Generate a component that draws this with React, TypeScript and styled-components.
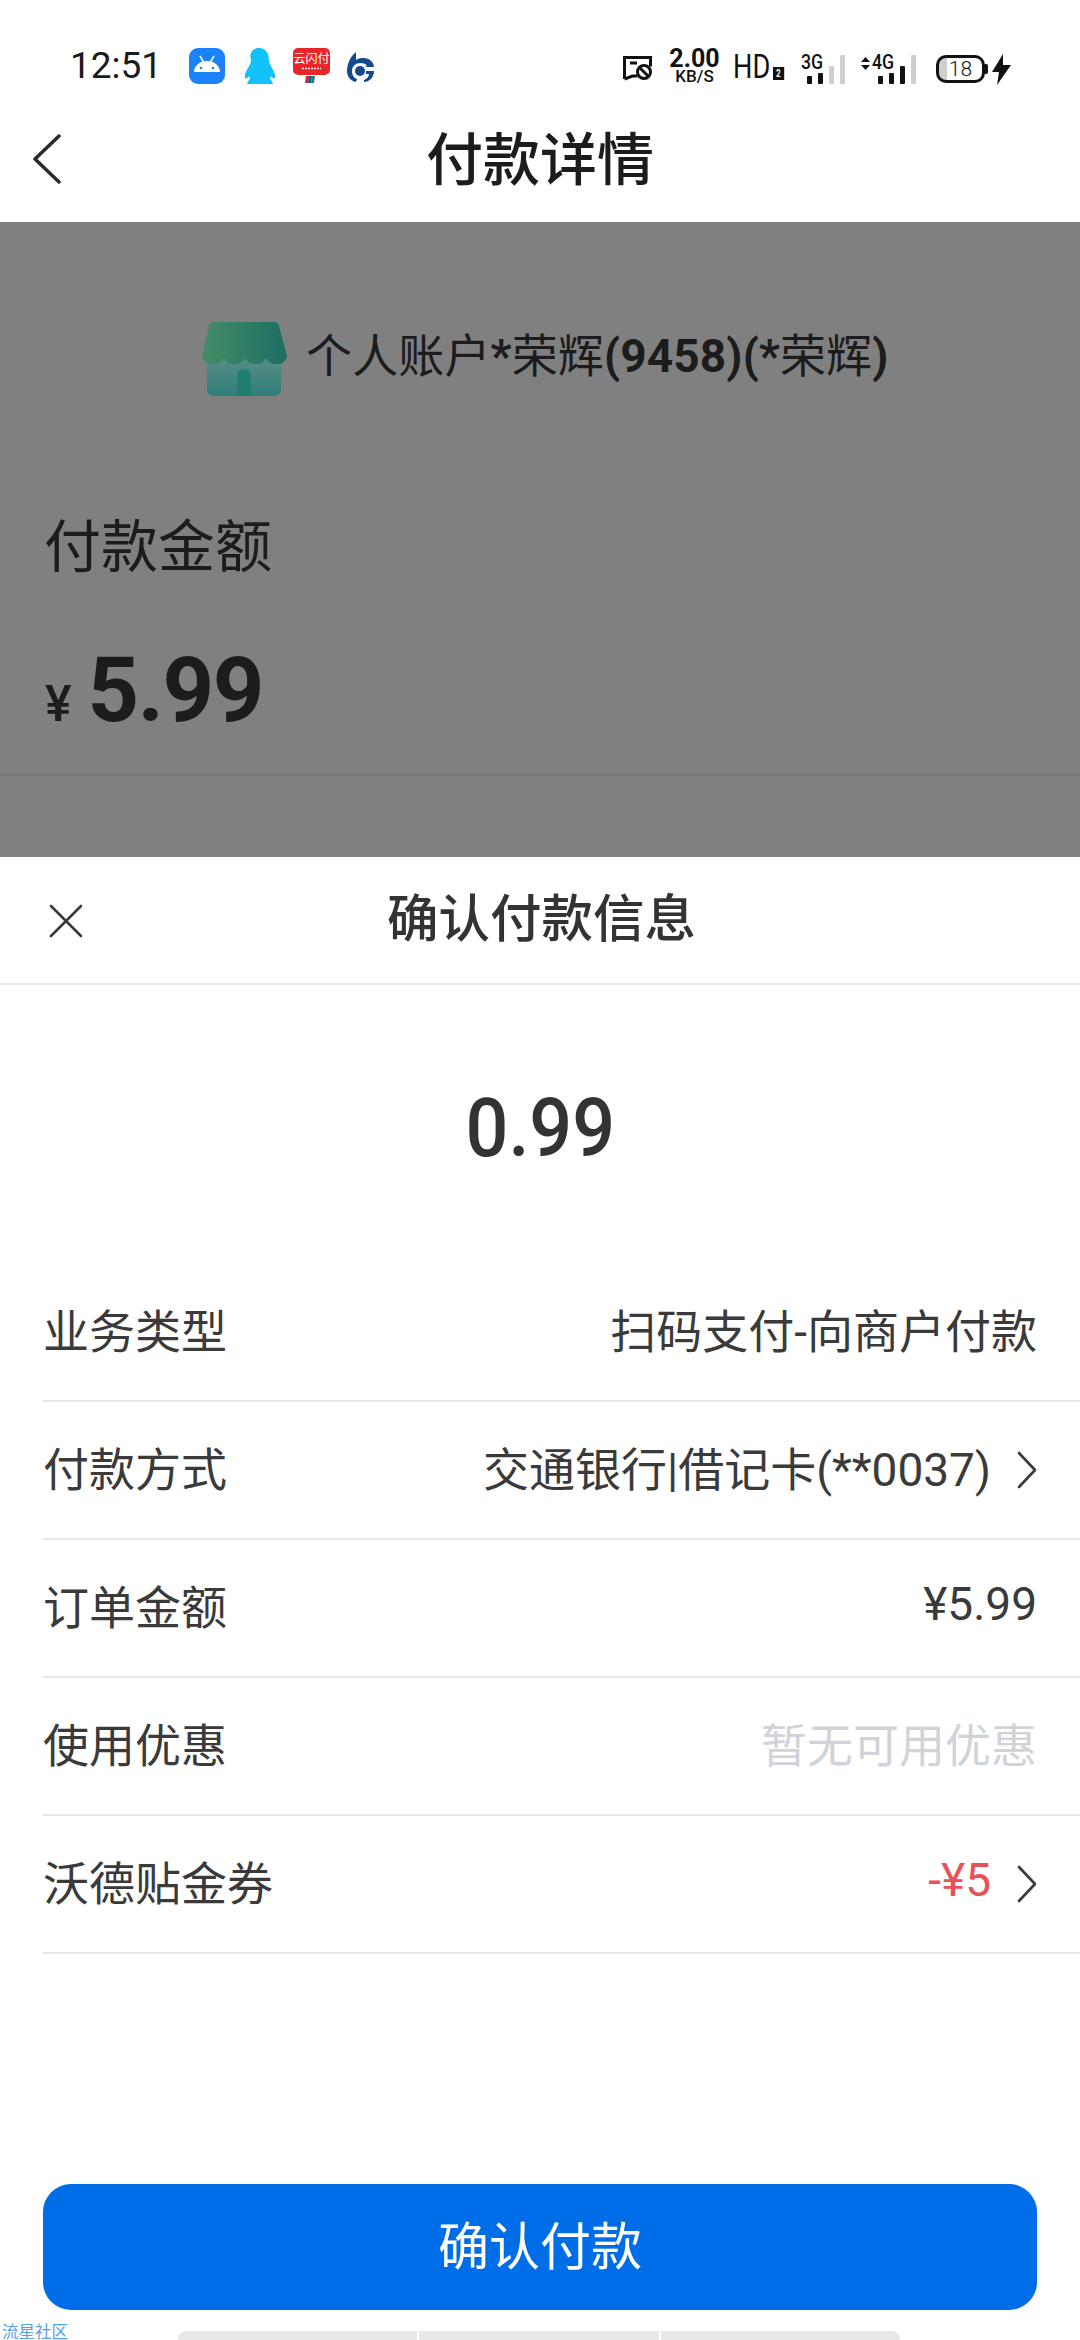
import React from "react";
import styled, { createGlobalStyle } from "styled-components";

const GlobalStyle = createGlobalStyle`
  html, body {
    margin: 0;
    padding: 0;
    background: #fff;
  }
  * {
    box-sizing: border-box;
  }
`;

const FONT = `Roboto, "Noto Sans CJK SC", sans-serif`;

const Page = styled.div`
  width: 1080px;
  height: 2340px;
  overflow: hidden;
  display: flex;
  flex-direction: column;
  background: #fff;
  font-family: ${FONT};
  color: #333;
`;

const StatusBar = styled.div`
  height: 88px;
  padding: 46px 69px 0 70px;
  display: flex;
  justify-content: space-between;
  align-items: flex-start;
  color: #111;
`;

const StatusLeft = styled.div`
  display: flex;
  align-items: center;
  height: 40px;
`;

const Clock = styled.div`
  font-size: 37px;
  line-height: 40px;
  width: 119px;
  color: #1a1a1a;
`;

const NoticeIcons = styled.div`
  display: flex;
  align-items: flex-start;
  gap: 17px;
  height: 36px;
`;

const StatusRight = styled.div`
  display: flex;
  align-items: center;
  height: 40px;
`;

const Speed = styled.div`
  margin-left: 18px;
  width: 47px;
  display: flex;
  flex-direction: column;
  align-items: center;
  white-space: nowrap;
`;

const SpeedValue = styled.span`
  font-weight: 700;
  font-size: 25px;
  line-height: 20px;
`;

const SpeedUnit = styled.span`
  font-size: 17px;
  line-height: 14px;
  font-weight: 500;
`;

const HdLabel = styled.div`
  margin-left: 15px;
  font-size: 34px;
  line-height: 40px;
  display: flex;
  align-items: flex-end;
  font-weight: 400;
  transform: scaleX(0.8);
  transform-origin: left center;
  width: 38px;
`;

const HdBadge = styled.span`
  margin-left: 3px;
  margin-bottom: 6px;
  width: 14px;
  height: 13px;
  background: #111;
  color: #fff;
  font-size: 10px;
  line-height: 13px;
  font-weight: 700;
  text-align: center;
  flex: none;
`;

const Signal = styled.div<{ $gap: number; $inset: number }>`
  margin-left: ${(p) => p.$gap}px;
  padding-left: ${(p) => p.$inset}px;
  position: relative;
  display: flex;
  align-items: flex-end;
  gap: 6px;
  height: 30px;
  margin-top: 6px;
`;

const SignalLabel = styled.span<{ $left: number }>`
  position: absolute;
  left: ${(p) => p.$left}px;
  top: -2px;
  font-size: 21px;
  line-height: 20px;
  font-weight: 500;
  transform: scaleX(0.84);
  transform-origin: left top;
  white-space: nowrap;
`;

const SignalBar = styled.i<{ $h: number; $off?: boolean }>`
  display: block;
  width: 5px;
  height: ${(p) => p.$h}px;
  border-radius: 1px;
  background: ${(p) => (p.$off ? "#cfcfcf" : "#111")};
`;

const Battery = styled.div`
  margin-left: 20px;
  width: 49px;
  height: 28px;
  border: 3px solid #111;
  border-radius: 10px;
  margin-top: 6px;
  text-align: center;
  font-size: 21px;
  line-height: 22px;
  font-weight: 300;
  overflow: hidden;
  background: linear-gradient(90deg, #cfcfcf 0 8px, transparent 8px);
`;

const BatteryTip = styled.span`
  width: 3px;
  height: 10px;
  margin-top: 6px;
  background: #111;
  border-radius: 0 2px 2px 0;
`;

const Nav = styled.div`
  height: 134px;
  position: relative;
  display: flex;
  align-items: center;
  justify-content: center;
`;

const BackButton = styled.div`
  position: absolute;
  left: 32px;
  top: 46px;
  width: 30px;
  height: 50px;
  color: #2b2b2b;
`;

const NavTitle = styled.div`
  font-size: 57px;
  line-height: 70px;
  font-weight: 500;
  color: #1c1c1c;
  margin-top: 12px;
`;

const DimPanel = styled.div`
  height: 635px;
  background: #808080;
  color: #1c1c1c;
  display: flex;
  flex-direction: column;
`;

const Merchant = styled.div`
  height: 177px;
  padding: 100px 0 0 202px;
  display: flex;
  align-items: flex-start;
`;

const MerchantName = styled.div`
  margin-left: 18px;
  margin-top: 4px;
  font-size: 46px;
  line-height: 60px;
  letter-spacing: 0.15px;
  white-space: nowrap;
`;

const MerchantStrong = styled.span`
  font-weight: 700;
`;

const AmountLabel = styled.div`
  margin-top: 114px;
  padding-left: 44px;
  font-size: 57px;
  line-height: 70px;
`;

const AmountRow = styled.div`
  margin-top: 63px;
  padding-left: 45px;
  height: 90px;
  display: flex;
  align-items: baseline;
`;

const Currency = styled.span`
  font-size: 50px;
  font-weight: 500;
  line-height: 90px;
`;

const AmountValue = styled.span`
  margin-left: 16px;
  font-size: 90px;
  line-height: 90px;
  font-weight: 700;
  letter-spacing: -1.4px;
`;

const DimLine = styled.div`
  margin-top: 38px;
  height: 2px;
  background: #757575;
`;

const Sheet = styled.div`
  flex: 1;
  display: flex;
  flex-direction: column;
  background: #fff;
`;

const SheetHeader = styled.div`
  height: 128px;
  flex: none;
  position: relative;
  display: flex;
  align-items: center;
  justify-content: center;
  border-bottom: 2px solid #e8e8e8;
`;

const CloseButton = styled.div`
  position: absolute;
  left: 48px;
  top: 46px;
  width: 36px;
  height: 36px;
  color: #3a3a3a;
`;

const SheetTitle = styled.div`
  font-size: 51.5px;
  line-height: 64px;
  font-weight: 500;
  color: #333;
  margin-left: 3px;
`;

const PayAmount = styled.div`
  height: 279px;
  flex: none;
  display: flex;
  align-items: center;
  justify-content: center;
  padding-top: 6px;
`;

const PayAmountValue = styled.span`
  font-size: 82px;
  line-height: 90px;
  font-weight: 500;
  color: #333;
  transform: scaleX(0.92);
`;

const Rows = styled.div`
  padding-left: 43px;
`;

const Row = styled.div`
  height: 138px;
  padding: 0 43px 8px 0;
  display: flex;
  align-items: center;
  justify-content: space-between;
  border-bottom: 2px solid #e8e8e8;
  font-size: 46px;
  color: #3a3a3a;
  white-space: nowrap;
`;

const RowValue = styled.div<{ $tone?: "muted" | "red" }>`
  display: flex;
  align-items: center;
  color: ${(p) =>
    p.$tone === "muted" ? "#d0d3d8" : p.$tone === "red" ? "#ea5058" : "#3a3a3a"};
`;

const Chevron = styled.svg`
  margin-left: 26px;
  margin-top: 8px;
  width: 20px;
  height: 38px;
  color: #3a3a3a;
  flex: none;
`;

const ConfirmWrap = styled.div`
  margin-top: 230px;
  padding: 0 43px;
`;

const ConfirmButton = styled.button`
  width: 100%;
  height: 126px;
  border: 0;
  border-radius: 28px;
  background: #006de8;
  color: #fff;
  font-family: ${FONT};
  font-size: 51px;
  line-height: 64px;
  padding: 2px 0 0;
`;

const BottomStrip = styled.div`
  margin-top: 13px;
  padding-left: 2px;
  height: 17px;
  display: flex;
  align-items: flex-start;
`;

const Watermark = styled.div`
  width: 176px;
  font-size: 16.5px;
  line-height: 20px;
  color: #5a9fe6;
  white-space: nowrap;
`;

const TabStub = styled.div`
  margin-top: 8px;
  height: 12px;
  width: 722px;
  display: flex;
  gap: 2px;
  border-radius: 8px 8px 0 0;
  overflow: hidden;
`;

const TabStubPart = styled.i`
  flex: 1;
  background: #e8e8e8;
`;

const rows = [
  { label: "业务类型", value: "扫码支付-向商户付款" },
  { label: "付款方式", value: "交通银行|借记卡(**0037)", arrow: true },
  { label: "订单金额", value: "¥5.99" },
  { label: "使用优惠", value: "暂无可用优惠", tone: "muted" as const },
  { label: "沃德贴金券", value: "-¥5", tone: "red" as const, arrow: true },
];

const StoreIcon = () => (
  <svg width="86" height="76" viewBox="0 0 86 76">
    <defs>
      <linearGradient id="roof" x1="0" y1="0" x2="1" y2="0">
        <stop offset="0" stopColor="#468d66" />
        <stop offset="1" stopColor="#1b6e64" />
      </linearGradient>
      <linearGradient id="wall" x1="0" y1="0" x2="0" y2="1">
        <stop offset="0" stopColor="#5f8f8a" />
        <stop offset="1" stopColor="#2f7e78" />
      </linearGradient>
    </defs>
    <path d="M5 30h74v38a6 6 0 0 1-6 6H11a6 6 0 0 1-6-6z" fill="url(#wall)" />
    <path d="M35 74V54a7 7 0 0 1 14 0v20z" fill="#217f72" />
    <path
      d="M12 0h60a5 5 0 0 1 5 4l8 30a9 9 0 0 1-10 8 11 11 0 0 1-11-6 11 11 0 0 1-11 6 11 11 0 0 1-10-6 11 11 0 0 1-10 6 11 11 0 0 1-11-6 11 11 0 0 1-11 6A9 9 0 0 1 0 34L7 4a5 5 0 0 1 5-4z"
      fill="url(#roof)"
    />
  </svg>
);

const AndroidBadge = () => (
  <svg width="36" height="36" viewBox="0 0 36 36">
    <rect width="36" height="36" rx="9" fill="#1a82fb" />
    <path d="M5 24a13 11 0 0 1 26 0z" fill="#fff" />
    <path d="M11 8l3.5 6M25 8l-3.5 6" stroke="#fff" strokeWidth="1.6" />
    <circle cx="12" cy="20" r="1.3" fill="#1a82fb" />
    <circle cx="24" cy="20" r="1.3" fill="#1a82fb" />
  </svg>
);

const PenguinBadge = () => (
  <svg width="34" height="36" viewBox="0 0 34 36">
    <path
      d="M17 0c7 0 10 6 10 12 0 3 1 4 3 8 2 3 4 8 3 10-1 1-3 0-4-2l-1 3c1 1 2 2 3 5H5c1-3 2-4 3-5l-1-3c-1 2-3 3-4 2-1-2 1-7 3-10 2-4 3-5 3-8C7 6 10 0 17 0z"
      fill="#12c3fb"
    />
  </svg>
);

const UnionPayBadge = () => (
  <svg width="37" height="36" viewBox="0 0 37 36">
    <path d="M5 0h27a5 5 0 0 1 5 5v17c0 3-2 4-5 5H5c-3-1-5-2-5-5V5a5 5 0 0 1 5-5z" fill="#e8262a" />
    <text x="18.5" y="15" textAnchor="middle" fontSize="12" fill="#fff" fontFamily="Noto Sans CJK SC, sans-serif">
      云闪付
    </text>
    <path d="M9 20.5h19" stroke="#fff" strokeWidth="1.6" strokeDasharray="2 1" />
    <path d="M13 28h3l-1 7h-3z" fill="#c9252d" />
    <path d="M16 28h3l-1 7h-3z" fill="#1c4f86" />
    <path d="M19 28h3l-1 7h-3z" fill="#16807c" />
  </svg>
);

const BlueLogo = () => (
  <svg width="27" height="32" viewBox="0 0 27 32" style={{ marginTop: 4 }}>
    <path
      d="M9 0C3 5 0 12 0 19c0 6 4 10 9 11l1-3c-3-1-5-4-5-8 0-5 4-8 8-8 4 0 6 1 7 3l-2 1h9c0-5-5-9-10-9-3 0-5 0-8 2z"
      fill="#14498f"
    />
    <circle cx="13" cy="19" r="5" fill="#14498f" />
    <path d="M19 19h8c0 6-4 10-9 11-1 0-1 0-1-2 3-1 5-4 5-6h-3z" fill="#14498f" />
  </svg>
);

const MessageOff = () => (
  <svg width="30" height="26" viewBox="0 0 30 26" style={{ marginTop: 4 }}>
    <path d="M1.5 24V2.5h26v9M1.5 24l8-3h5" fill="none" stroke="#111" strokeWidth="3" />
    <path d="M7 8h7" stroke="#111" strokeWidth="3" />
    <circle cx="21" cy="17" r="6.5" fill="#fff" stroke="#111" strokeWidth="3" />
    <path d="M17 13l8 8" stroke="#111" strokeWidth="3" />
  </svg>
);

const UpDown = () => (
  <svg width="9" height="13" viewBox="0 0 9 13" style={{ position: "absolute", left: 0, top: 3 }}>
    <path d="M4.5 0L9 5H0zM4.5 13L0 8h9z" fill="#111" />
  </svg>
);

const Bolt = () => (
  <svg width="19" height="31" viewBox="0 0 19 31" style={{ marginLeft: 4, marginTop: 6 }}>
    <path d="M11 0L0 18h7l-2 13L19 11h-8z" fill="#111" />
  </svg>
);

export default function App() {
  return (
    <Page>
      <GlobalStyle />
      <StatusBar>
        <StatusLeft>
          <Clock>12:51</Clock>
          <NoticeIcons>
            <AndroidBadge />
            <PenguinBadge />
            <UnionPayBadge />
            <BlueLogo />
          </NoticeIcons>
        </StatusLeft>
        <StatusRight>
          <MessageOff />
          <Speed>
            <SpeedValue>2.00</SpeedValue>
            <SpeedUnit>KB/S</SpeedUnit>
          </Speed>
          <HdLabel>
            HD
            <HdBadge>2</HdBadge>
          </HdLabel>
          <Signal $gap={30} $inset={6}>
            <SignalLabel $left={0}>3G</SignalLabel>
            <SignalBar $h={8} />
            <SignalBar $h={11} />
            <SignalBar $h={18} $off />
            <SignalBar $h={29} $off />
          </Signal>
          <Signal $gap={16} $inset={17}>
            <UpDown />
            <SignalLabel $left={11}>4G</SignalLabel>
            <SignalBar $h={8} />
            <SignalBar $h={11} />
            <SignalBar $h={18} />
            <SignalBar $h={29} $off />
          </Signal>
          <Battery>18</Battery>
          <BatteryTip />
          <Bolt />
        </StatusRight>
      </StatusBar>
      <Nav>
        <BackButton>
          <svg width="30" height="50" viewBox="0 0 30 50">
            <path d="M27 2L3 25l24 23" fill="none" stroke="currentColor" strokeWidth="3.5" strokeLinecap="round" strokeLinejoin="round" />
          </svg>
        </BackButton>
        <NavTitle>付款详情</NavTitle>
      </Nav>
      <DimPanel>
        <Merchant>
          <StoreIcon />
          <MerchantName>
            个人账户<MerchantStrong>*</MerchantStrong>荣辉<MerchantStrong>(9458)(*</MerchantStrong>荣辉<MerchantStrong>)</MerchantStrong>
          </MerchantName>
        </Merchant>
        <AmountLabel>付款金额</AmountLabel>
        <AmountRow>
          <Currency>¥</Currency>
          <AmountValue>5.99</AmountValue>
        </AmountRow>
        <DimLine />
      </DimPanel>
      <Sheet>
        <SheetHeader>
          <CloseButton>
            <svg width="36" height="36" viewBox="0 0 36 36">
              <path d="M3 3l30 30M33 3L3 33" stroke="currentColor" strokeWidth="2.6" strokeLinecap="round" />
            </svg>
          </CloseButton>
          <SheetTitle>确认付款信息</SheetTitle>
        </SheetHeader>
        <PayAmount>
          <PayAmountValue>0.99</PayAmountValue>
        </PayAmount>
        <Rows>
          {rows.map((row) => (
            <Row key={row.label}>
              <span>{row.label}</span>
              <RowValue $tone={row.tone}>
                {row.value}
                {row.arrow && (
                  <Chevron viewBox="0 0 20 38">
                    <path d="M2 2l16 17L2 36" fill="none" stroke="currentColor" strokeWidth="2.6" strokeLinecap="round" strokeLinejoin="round" />
                  </Chevron>
                )}
              </RowValue>
            </Row>
          ))}
        </Rows>
        <ConfirmWrap>
          <ConfirmButton>确认付款</ConfirmButton>
        </ConfirmWrap>
        <BottomStrip>
          <Watermark>流星社区</Watermark>
          <TabStub>
            <TabStubPart />
            <TabStubPart />
            <TabStubPart />
          </TabStub>
        </BottomStrip>
      </Sheet>
    </Page>
  );
}
